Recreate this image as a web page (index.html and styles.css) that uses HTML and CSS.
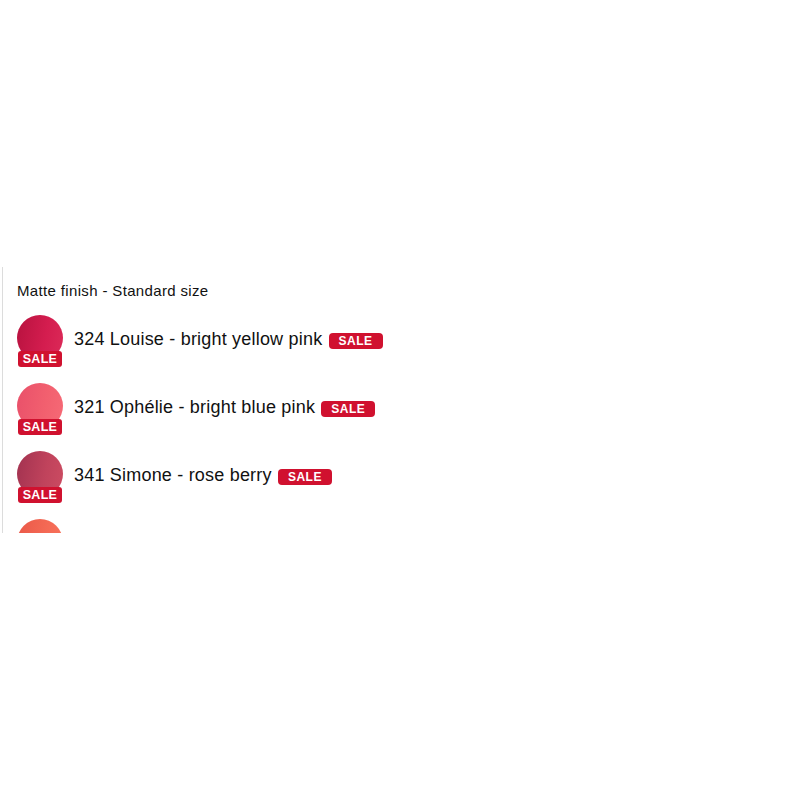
FILE: index.html
```html
<!DOCTYPE html>
<html lang="en">
<head>
    <meta charset="UTF-8">
    <meta name="viewport" content="width=device-width, initial-scale=1.0">
    <title>Shades</title>
    <link rel="stylesheet" href="styles.css">
</head>
<body>
    <div class="shade-panel">
        <h2 class="shade-title">Matte finish - Standard size</h2>
        <ul class="shade-list">
            <li class="shade-row">
                <span class="swatch swatch-louise"><span class="sale-tag">SALE</span></span>
                <span class="shade-name">324 Louise - bright yellow pink <span class="sale-badge">SALE</span></span>
            </li>
            <li class="shade-row">
                <span class="swatch swatch-ophelie"><span class="sale-tag">SALE</span></span>
                <span class="shade-name">321 Ophélie - bright blue pink <span class="sale-badge">SALE</span></span>
            </li>
            <li class="shade-row">
                <span class="swatch swatch-simone"><span class="sale-tag">SALE</span></span>
                <span class="shade-name">341 Simone - rose berry <span class="sale-badge">SALE</span></span>
            </li>
            <li class="shade-row">
                <span class="swatch swatch-coral"></span>
                <span class="shade-name"></span>
            </li>
        </ul>
    </div>
</body>
</html>
```

FILE: styles.css
```css
body {
    margin: 0;
    padding: 0;
    background-color: #ffffff;
    color: #111111;
    font-family: "Liberation Sans", Arial, sans-serif;
}

.shade-panel {
    margin: 267px 0 0 2px;
    height: 266px;
    overflow: hidden;
    border-left: 1px solid #dcdcdc;
    padding: 15px 0 0 14px;
    box-sizing: border-box;
}

.shade-title {
    margin: 0 0 15px;
    font-size: 15px;
    font-weight: normal;
    line-height: 18px;
    letter-spacing: 0.35px;
}

.shade-list {
    list-style: none;
    margin: 0;
    padding: 0;
    display: flex;
    flex-direction: column;
    gap: 22px;
}

.shade-row {
    display: flex;
    align-items: center;
    gap: 11px;
}

.swatch {
    position: relative;
    flex: none;
    width: 46px;
    height: 46px;
    border-radius: 50%;
}

.swatch-louise {
    background: linear-gradient(100deg, #b8123f, #d41d4f 60%, #dc2a58);
}

.swatch-ophelie {
    background: linear-gradient(100deg, #e9506a, #f2606f 60%, #f66a76);
}

.swatch-simone {
    background: linear-gradient(100deg, #a23250, #c0435c 60%, #cc4c62);
}

.swatch-coral {
    background: linear-gradient(100deg, #ea5848, #f46a55 60%, #f8735c);
}

.sale-tag {
    position: absolute;
    left: 1px;
    bottom: -6px;
    width: 44px;
    height: 16px;
    border-radius: 3px;
    background-color: #d0112f;
    color: #ffffff;
    font-size: 12.5px;
    font-weight: bold;
    line-height: 16px;
    text-align: center;
    letter-spacing: 0.3px;
}

.shade-name {
    margin-top: 2px;
    font-size: 18px;
    line-height: 20px;
    letter-spacing: 0.2px;
    white-space: nowrap;
}

.sale-badge {
    display: inline-block;
    vertical-align: 0;
    margin-left: 1px;
    padding: 0 10px;
    border-radius: 4px;
    background-color: #d0112f;
    color: #ffffff;
    font-size: 12px;
    font-weight: bold;
    line-height: 16px;
    letter-spacing: 0.5px;
}
```
